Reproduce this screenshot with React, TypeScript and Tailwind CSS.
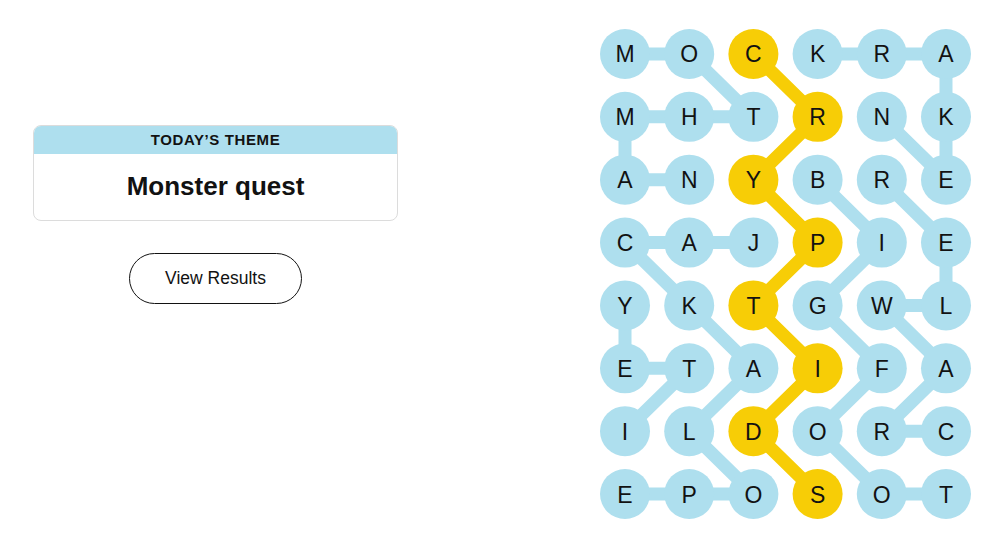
import React from "react";

const GRID = [
  "MOCKRA",
  "MHTRNK",
  "ANYBRE",
  "CAJPIE",
  "YKTGWL",
  "ETAIFA",
  "ILDORC",
  "EPOSOT",
];

type P = [number, number];
const blueWords: P[][] = [
  [[0, 0], [0, 1], [1, 2], [1, 1], [1, 0], [2, 0], [2, 1]],
  [[0, 3], [0, 4], [0, 5], [1, 5], [2, 5], [1, 4]],
  [[2, 3], [3, 4], [4, 3], [5, 4], [6, 3], [7, 4], [7, 5]],
  [[3, 2], [3, 1], [3, 0], [4, 1], [5, 2], [6, 1], [7, 2], [7, 1], [7, 0]],
  [[4, 0], [5, 0], [5, 1], [6, 0]],
  [[6, 5], [6, 4], [5, 5], [4, 4], [4, 5], [3, 5], [2, 4]],
];
const yellowWord: P[] = [[0, 2], [1, 3], [2, 2], [3, 3], [4, 2], [5, 3], [6, 2], [7, 3]];

const BLUE = "#aedfee";
const YELLOW = "#f7cd06";
const R = 25;
const DX = 64.2;
const DY = 62.86;
const cx = (c: number) => R + c * DX;
const cy = (r: number) => R + r * DY;

function Board() {
  const yellowSet = new Set(yellowWord.map(([r, c]) => `${r},${c}`));
  const W = cx(5) + R + 1;
  const H = cy(7) + R + 1;
  return (
    <svg width={W} height={H} viewBox={`0 0 ${W} ${H}`}>
      {blueWords.map((w, i) => (
        <polyline
          key={i}
          points={w.map(([r, c]) => `${cx(c)},${cy(r)}`).join(" ")}
          fill="none"
          stroke={BLUE}
          strokeWidth={13}
          strokeLinejoin="round"
        />
      ))}
      <polyline
        points={yellowWord.map(([r, c]) => `${cx(c)},${cy(r)}`).join(" ")}
        fill="none"
        stroke={YELLOW}
        strokeWidth={13}
        strokeLinejoin="round"
      />
      {GRID.map((row, r) =>
        row.split("").map((ch, c) => (
          <g key={`${r}-${c}`}>
            <circle cx={cx(c)} cy={cy(r)} r={R} fill={yellowSet.has(`${r},${c}`) ? YELLOW : BLUE} />
            <text
              x={cx(c)}
              y={cy(r) + 8.5}
              textAnchor="middle"
              fontSize={23}
              fontFamily="'Liberation Sans', Arial, sans-serif"
              fill="#121212"
            >
              {ch}
            </text>
          </g>
        ))
      )}
    </svg>
  );
}

export default function App() {
  return (
    <div className="w-[1000px] h-[543px] bg-white flex font-['Liberation_Sans',Arial,sans-serif] text-[#121212]">
      <div className="w-[398px] pl-[33px] pt-[125px] flex flex-col items-center shrink-0">
        <div className="w-[365px] rounded-[8px] border border-[#dcdcdc] overflow-hidden">
          <div className="h-[28px] bg-[#aedfee] flex items-center justify-center text-[15px] font-bold tracking-[0.6px] uppercase">
            TODAY’S THEME
          </div>
          <div className="h-[66px] flex items-center justify-center text-[26px] font-bold pb-[2px]">
            Monster quest
          </div>
        </div>
        <button className="mt-[32px] w-[173px] h-[51px] rounded-full border border-[#121212] bg-white text-[17.5px] flex items-center justify-center">
          View Results
        </button>
      </div>
      <div className="pl-[202px] pt-[29px]">
        <Board />
      </div>
    </div>
  );
}
